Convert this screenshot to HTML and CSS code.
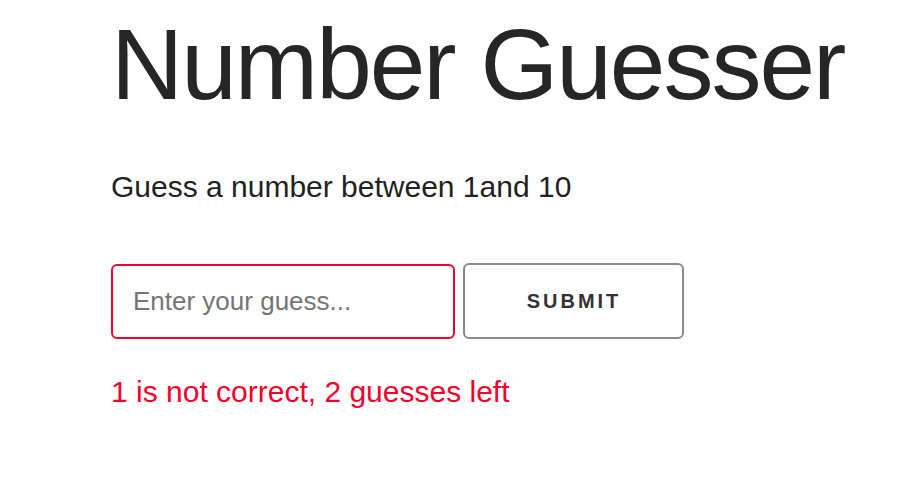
FILE: index.html
```html
<!DOCTYPE html>
<html lang="en">
<head>
<meta charset="utf-8">
<title>Number Guesser</title>
<link rel="stylesheet" href="styles.css">
</head>
<body>
<main class="game">
  <h1 class="title">Number Guesser</h1>
  <p class="intro">Guess a number between 1and 10</p>
  <form class="guess-form">
    <input class="guess-input" type="text" placeholder="Enter your guess...">
    <button class="submit-btn" type="button">Submit</button>
  </form>
  <p class="message">1 is not correct, 2 guesses left</p>
</main>
</body>
</html>
```

FILE: styles.css
```css
html, body {
  margin: 0;
  padding: 0;
  background: #ffffff;
}

body {
  font-family: "Liberation Sans", Arial, sans-serif;
  color: #262626;
}

.game {
  display: flex;
  flex-direction: column;
  align-items: flex-start;
  padding: 14px 0 0 111px;
}

.title {
  margin: 0;
  font-size: 100px;
  font-weight: 400;
  line-height: 1;
  letter-spacing: -2px;
  color: #262626;
}

.intro {
  margin: 58px 0 0;
  font-size: 30px;
  line-height: 1;
  color: #222222;
}

.guess-form {
  display: flex;
  align-items: flex-end;
  gap: 8px;
  margin-top: 61px;
}

.guess-input {
  box-sizing: border-box;
  width: 344px;
  height: 75px;
  border: 2px solid #f5002d;
  border-radius: 6px;
  padding: 0 20px;
  font-family: "Liberation Sans", Arial, sans-serif;
  font-size: 26px;
  color: #333;
  outline: none;
}

.guess-input::placeholder {
  color: #757575;
}

.submit-btn {
  box-sizing: border-box;
  width: 221px;
  height: 76px;
  border: 2px solid #8a8a8a;
  border-radius: 6px;
  background: #ffffff;
  font-family: "Liberation Sans", Arial, sans-serif;
  font-size: 20px;
  font-weight: 700;
  letter-spacing: 3px;
  text-transform: uppercase;
  color: #333333;
  padding: 0 0 0 1px;
}

.message {
  margin: 36px 0 0;
  font-size: 30px;
  line-height: 1.15;
  color: #f5002d;
}
```
